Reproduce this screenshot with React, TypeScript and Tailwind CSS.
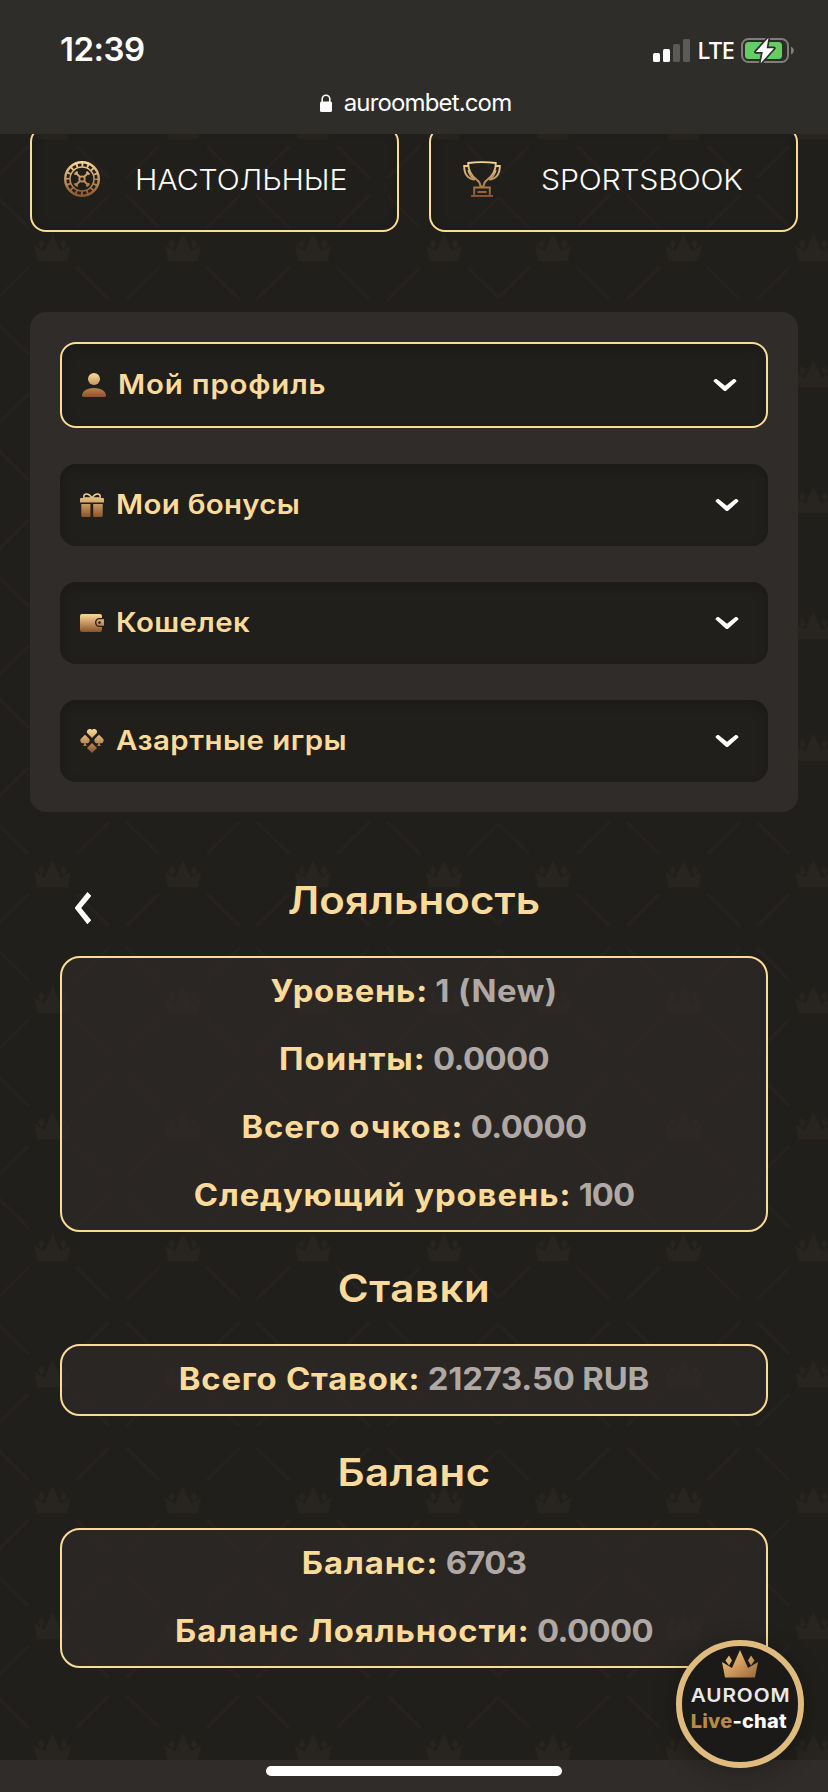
import type { ReactNode } from 'react';

type Row = { label: string; value: string; labelTracking: string; valueTracking: string };

const MENU: { label: string; icon: ReactNode; tracking: string; active?: boolean }[] = [
  { label: 'Мой профиль', icon: <UserIcon />, tracking: 'tracking-[0.77px]', active: true },
  { label: 'Мои бонусы', icon: <GiftIcon />, tracking: 'tracking-[0.27px]' },
  { label: 'Кошелек', icon: <WalletIcon />, tracking: 'tracking-[0.37px]' },
  { label: 'Азартные игры', icon: <SuitsIcon />, tracking: 'tracking-[0.45px]' },
];

const LOYALTY: Row[] = [
  { label: 'Уровень:', value: '1 (New)', labelTracking: 'tracking-[0.68px]', valueTracking: 'tracking-[0.38px]' },
  { label: 'Поинты:', value: '0.0000', labelTracking: 'tracking-[0.87px]', valueTracking: 'tracking-[-0.63px]' },
  { label: 'Всего очков:', value: '0.0000', labelTracking: 'tracking-[0.83px]', valueTracking: 'tracking-[-0.63px]' },
  { label: 'Следующий уровень:', value: '100', labelTracking: 'tracking-[0.82px]', valueTracking: 'tracking-[-0.93px]' },
];

const BETS: Row[] = [
  { label: 'Всего Ставок:', value: '21273.50 RUB', labelTracking: 'tracking-[0.71px]', valueTracking: 'tracking-[-0.18px]' },
];

const BALANCE: Row[] = [
  { label: 'Баланс:', value: '6703', labelTracking: 'tracking-[0.87px]', valueTracking: 'tracking-[-0.69px]' },
  { label: 'Баланс Лояльности:', value: '0.0000', labelTracking: 'tracking-[0.86px]', valueTracking: 'tracking-[-0.63px]' },
];

const CROWN =
  'M-15 13.5 L-18 -2 L-8 4 L0 -14 L8 4 L18 -2 L15 13.5 Z M-11 -8.5 L-8 -3.5 L-11 1.5 L-14.5 -3.5 Z M11 -8.5 L14.5 -3.5 L11 1.5 L8 -3.5 Z';

const CROWN_COLS = [54.5, 185, 315, 446];
const CROWN_ROWS = [60.5, 187, 313, 439];

/* ---------- background ---------- */

function Backdrop() {
  return (
    <svg className="absolute inset-0 h-full w-full" aria-hidden="true">
      <defs>
        <pattern id="crowns" x="-2" y="-313" width="500.5" height="500" patternUnits="userSpaceOnUse">
          {CROWN_ROWS.map((y) =>
            CROWN_COLS.map((x) => (
              <g key={`${x}-${y}`} transform={`translate(${x} ${y})`}>
                <path d={CROWN} fill="#282420" />
                <path
                  d="M24 20 L56.5 52 M-24 20 L-56.5 52 M24 -20 L56.5 -52 M-24 -20 L-56.5 -52"
                  stroke="#27221f"
                  strokeWidth="2.5"
                />
              </g>
            )),
          )}
        </pattern>
      </defs>
      <rect width="100%" height="100%" fill="url(#crowns)" />
    </svg>
  );
}

/* ---------- icons ---------- */

function GoldDefs() {
  return (
    <svg className="absolute h-0 w-0" aria-hidden="true">
      <defs>
        <linearGradient id="gold24" gradientUnits="userSpaceOnUse" x1="0" y1="0" x2="0" y2="24">
          <stop offset="0" stopColor="#fbda98" />
          <stop offset="1" stopColor="#8c5229" />
        </linearGradient>
        <linearGradient id="gold36" gradientUnits="userSpaceOnUse" x1="0" y1="0" x2="0" y2="36">
          <stop offset="0" stopColor="#fbda98" />
          <stop offset="1" stopColor="#8c5229" />
        </linearGradient>
        <linearGradient id="goldWallet" gradientUnits="userSpaceOnUse" x1="0" y1="3" x2="0" y2="21">
          <stop offset="0" stopColor="#fbda98" />
          <stop offset="1" stopColor="#8c5229" />
        </linearGradient>
      </defs>
    </svg>
  );
}

function UserIcon() {
  return (
    <svg className="size-6" viewBox="0 0 24 24" fill="url(#gold24)">
      <circle cx="12" cy="6" r="6" />
      <path d="M0 22.5 C0 18 5.5 15 12 15 S24 18 24 22.5 Q24 24 22.5 24 H1.5 Q0 24 0 22.5 Z" />
    </svg>
  );
}

function GiftIcon() {
  return (
    <svg className="size-6" viewBox="0 0 24 24" fill="url(#gold24)">
      <path
        d="M11.5 5 H4 C3 1.8 5.5 0.6 7.3 1 C9.5 1.4 10.8 3.2 12 4.6 C13.2 3.2 14.5 1.4 16.7 1 C18.5 0.6 21 1.8 20 5 H12.5"
        fill="none"
        stroke="url(#gold24)"
        strokeWidth="1.5"
      />
      <path d="M1 5 H23 Q24 5 24 6 V9.5 H0 V6 Q0 5 1 5 Z" />
      <path d="M1.3 11 H10.5 V24 H2.5 Q1.3 24 1.3 22.8 Z M13.2 11 H22.7 V22.8 Q22.7 24 21.5 24 H13.2 Z" />
    </svg>
  );
}

function WalletIcon() {
  return (
    <svg className="size-6" viewBox="0 0 24 24" fill="url(#goldWallet)">
      <path d="M2 3 H20 Q22 3 22 5 V7 H19.5 A4.4 4.4 0 0 0 19.5 16 H22 V19 Q22 21 20 21 H2 Q0 21 0 19 V5 Q0 3 2 3 Z" />
      <path
        fillRule="evenodd"
        d="M19.6 8.3 H24 V14.7 H19.6 A3.2 3.2 0 0 1 19.6 8.3 Z M19.5 10.3 A1.3 1.3 0 1 0 19.5 12.9 A1.3 1.3 0 1 0 19.5 10.3 Z"
      />
    </svg>
  );
}

function SuitsIcon() {
  return (
    <svg className="size-6" viewBox="0 0 24 24" fill="url(#gold24)">
      <path d="M12 9 L7.6 4.6 C5.8 2.4 7.8 0 9.8 0 C11 0 11.7 0.6 12 1.1 C12.3 0.6 13 0 14.2 0 C16.2 0 18.2 2.4 16.4 4.6 Z" />
      <path d="M12 14 L17 19 L12 24 L7 19 Z" />
      <path d="M5 5.8 L8.9 9.6 C11.2 12 8 15.6 5.6 13.9 C5.7 15.2 6.2 16.2 7 17 H3 C3.8 16.2 4.3 15.2 4.4 13.9 C2 15.6 -1.2 12 1.1 9.6 Z" />
      <path d="M19 5.8 L22.9 9.6 C25.2 12 22 15.6 19.6 13.9 C19.7 15.2 20.2 16.2 21 17 H17 C17.8 16.2 18.3 15.2 18.4 13.9 C16 15.6 12.8 12 15.1 9.6 Z" />
    </svg>
  );
}

function RouletteIcon() {
  return (
    <svg className="size-9" viewBox="0 0 36 36" fill="none" stroke="url(#gold36)">
      <circle cx="18" cy="18" r="16.8" strokeWidth="2.4" />
      <circle cx="18" cy="18" r="12" strokeWidth="1.6" />
      <circle cx="18" cy="18" r="14.2" strokeWidth="4" strokeDasharray="1.9 3.676" strokeDashoffset="0.95" />
      <circle cx="18" cy="18" r="2.7" strokeWidth="1.8" />
      <path d="M16 16 L12.2 12.2 M20 16 L23.8 12.2 M16 20 L12.2 23.8 M20 20 L23.8 23.8" strokeWidth="2" />
      <path
        d="M11.3 12.9 L12.9 11.3 M23.1 11.3 L24.7 12.9 M11.3 23.1 L12.9 24.7 M24.7 23.1 L23.1 24.7"
        strokeWidth="2.2"
        strokeLinecap="round"
      />
    </svg>
  );
}

function TrophyIcon() {
  return (
    <svg className="h-9 w-[38px]" viewBox="0 0 38 36" fill="none" stroke="url(#gold36)" strokeWidth="1.9">
      <path d="M5.2 2 Q19 0.2 32.8 2 C33 11 28 16 24 19 Q20.8 21.2 20.5 25.5 H17.5 Q17.2 21.2 14 19 C10 16 5 11 5.2 2 Z" />
      <path d="M5.2 5 H1.2 C1.2 12 4 18 12 18.6 M32.8 5 H36.8 C36.8 12 34 18 26 18.6" />
      <path d="M5 9 C6 13 8 16 11 18 M33 9 C32 13 30 16 27 18" strokeWidth="1.3" />
      <path d="M11.2 34.5 V26.5 H26.8 V34.5 M14.5 31 H23.5" />
      <path d="M8 35 H30" />
    </svg>
  );
}

function ChevronDown() {
  return (
    <svg className="h-3 w-6" viewBox="0 0 24 12" fill="#fff">
      <path d="M0.4 2.2 Q0.8 0.4 2.6 0 H3.6 L12 6.8 L20.4 0 H21.4 Q23.2 0.4 23.6 2.2 L12.8 12 H11.2 Z" />
    </svg>
  );
}

function ChevronLeft() {
  return (
    <svg className="h-8 w-4" viewBox="0 0 16 32" fill="#fff">
      <path d="M12.4 0 L16 3.6 V4.2 L6.2 16 L16 28 V28.6 L12.6 32 H12.2 L0 16.6 V15.4 Z" />
    </svg>
  );
}

/* ---------- browser chrome ---------- */

function StatusBar() {
  return (
    <header className="relative z-10 h-[134px] shrink-0 bg-[#2e2d2a]">
      <div className="flex h-[100px] items-center justify-between pr-[34px] pl-[60px]">
        <span className="text-[33px] font-semibold tracking-[-0.5px] text-white">12:39</span>
        <div className="flex items-center gap-2">
          <svg className="h-[23px] w-[37px]" viewBox="0 0 37 23">
            <rect x="0" y="14" width="7" height="9" rx="1.6" fill="#fff" />
            <rect x="10" y="10" width="7" height="13" rx="1.6" fill="#fff" />
            <rect x="20" y="5" width="7" height="18" rx="1.6" fill="#5b5a57" />
            <rect x="30" y="0" width="7" height="23" rx="1.6" fill="#5b5a57" />
          </svg>
          <span className="-mr-px -ml-px font-['Noto_Sans'] text-[24px] font-medium tracking-[-0.8px] text-white">LTE</span>
          <svg className="h-[27px] w-[53px]" viewBox="0 0 53 27">
            <rect x="1" y="2" width="46" height="23" rx="6.5" fill="none" stroke="#7f7e7b" strokeWidth="2" />
            <rect x="4" y="5" width="37" height="17" rx="3.5" fill="#63ce66" />
            <path d="M50 9.5 Q53 11 53 13.5 T50 17.5 Z" fill="#7f7e7b" />
            <path
              d="M27.5 0.8 L14.8 15 H21.8 L19.6 26.2 L33 11.2 H25.6 Z"
              fill="#fff"
              stroke="#2e2d2a"
              strokeWidth="3.4"
              strokeLinejoin="round"
              paintOrder="stroke"
            />
          </svg>
        </div>
      </div>
      <div className="flex h-[6px] items-center justify-center gap-3 pl-[3px]">
        <svg className="h-[18px] w-3" viewBox="0 0 12 18">
          <rect x="0" y="7.5" width="12" height="10.5" rx="1.5" fill="#fff" />
          <path d="M2.2 8 V5 A3.8 3.8 0 0 1 9.8 5 V8" fill="none" stroke="#fff" strokeWidth="1.6" />
        </svg>
        <span className="text-[24px] tracking-[-0.85px] text-white">auroombet.com</span>
      </div>
    </header>
  );
}

/* ---------- page blocks ---------- */

function MenuItem({ label, icon, tracking, active }: (typeof MENU)[number]) {
  return (
    <div
      className={`flex items-center justify-between rounded-2xl bg-[#201f1b] pr-[29px] pl-5 shadow-[inset_0_4px_12px_rgba(0,0,0,0.18)] ${
        active ? 'h-[86px] border-2 border-[#fcda97]' : 'h-[82px]'
      }`}
    >
      <span className="flex items-center gap-3">
        {icon}
        <span className={`origin-left scale-x-[1.07] text-[27.5px] font-semibold text-[#fcdb9a] ${tracking}`}>{label}</span>
      </span>
      <ChevronDown />
    </div>
  );
}

function StatCard({ rows }: { rows: Row[] }) {
  return (
    <div className="rounded-[20px] border-2 border-[#fcda97] bg-[#302c2a]/60">
      {rows.map((row) => (
        <div
          key={row.label}
          className="flex h-[68px] scale-x-[1.06] items-center justify-center gap-[7px] pb-0.5 text-[31px] font-bold whitespace-nowrap"
        >
          <span className={`text-[#fcdb9a] ${row.labelTracking}`}>{row.label}</span>
          <span className={`text-[#b0a8a5] ${row.valueTracking}`}>{row.value}</span>
        </div>
      ))}
    </div>
  );
}

function Heading({ children, tracking }: { children: ReactNode; tracking: string }) {
  return (
    <h2 className={`flex h-28 scale-x-[1.09] items-center justify-center pt-0.5 text-[38.5px] font-semibold text-[#fcdb9a] ${tracking}`}>
      {children}
    </h2>
  );
}

function LiveChat() {
  return (
    <button className="absolute right-6 bottom-6 z-20 flex size-32 flex-col items-center rounded-full border-[6px] border-[#dfbb7e] bg-[#1b1a19] pt-[3px] shadow-[0_4px_24px_rgba(0,0,0,0.3)]">
      <svg className="h-[30px] w-10" viewBox="-20 -15 40 30">
        <defs>
          <linearGradient id="chatCrown" x1="0" y1="0" x2="1" y2="1">
            <stop offset="0" stopColor="#f2cd8b" />
            <stop offset="0.5" stopColor="#cf9c5c" />
            <stop offset="1" stopColor="#9a6538" />
          </linearGradient>
        </defs>
        <path d={CROWN} fill="url(#chatCrown)" />
      </svg>
      <span className="mt-[5px] scale-x-[1.12] pl-px text-[18.5px] leading-[22px] font-semibold tracking-[0.8px] text-[#ebe9e8]">
        AUROOM
      </span>
      <span className="mt-[5px] -ml-[3px] scale-x-[1.05] text-[19px] leading-[22px] font-extrabold tracking-[0.2px] text-white">
        <span className="text-[#bb8849]">Live</span>-chat
      </span>
    </button>
  );
}

export default function App() {
  return (
    <div className="relative flex h-[1792px] w-[828px] flex-col overflow-hidden bg-[#201f1b] font-['Inter',sans-serif]">
      <Backdrop />
      <GoldDefs />
      <StatusBar />

      <main className="relative flex-1 px-[30px]">
        <div className="-mt-2 grid grid-cols-2 gap-[30px]">
          <div className="flex h-[106px] items-center rounded-2xl border-2 border-[#fcda97] pl-8 shadow-[inset_0_0_12px_rgba(0,0,0,0.15)]">
            <RouletteIcon />
            <span className="ml-[35px] origin-left scale-x-[1.08] pt-px text-[28px] font-light tracking-[-0.1px] text-white">НАСТОЛЬНЫЕ</span>
          </div>
          <div className="flex h-[106px] items-center rounded-2xl border-2 border-[#fcda97] pl-8 shadow-[inset_0_0_12px_rgba(0,0,0,0.15)]">
            <TrophyIcon />
            <span className="ml-10 origin-left scale-x-[1.08] pt-px text-[28px] font-light tracking-[-0.2px] text-white">SPORTSBOOK</span>
          </div>
        </div>

        <nav className="mt-20 flex flex-col gap-9 rounded-2xl bg-[#302c2a] p-[30px]">
          {MENU.map((item) => (
            <MenuItem key={item.label} {...item} />
          ))}
        </nav>

        <section className="mt-8 px-[30px]">
          <div className="relative">
            <button className="absolute top-12 left-[15px] z-10">
              <ChevronLeft />
            </button>
            <Heading tracking="tracking-[0.12px]">Лояльность</Heading>
          </div>
          <StatCard rows={LOYALTY} />
          <Heading tracking="tracking-[0.52px]">Ставки</Heading>
          <StatCard rows={BETS} />
          <Heading tracking="tracking-[0.43px]">Баланс</Heading>
          <StatCard rows={BALANCE} />
        </section>
      </main>

      <footer className="relative flex h-8 shrink-0 justify-center bg-[#302c2a] pt-1.5">
        <div className="h-2.5 w-[296px] rounded-full bg-white" />
      </footer>

      <LiveChat />
    </div>
  );
}
